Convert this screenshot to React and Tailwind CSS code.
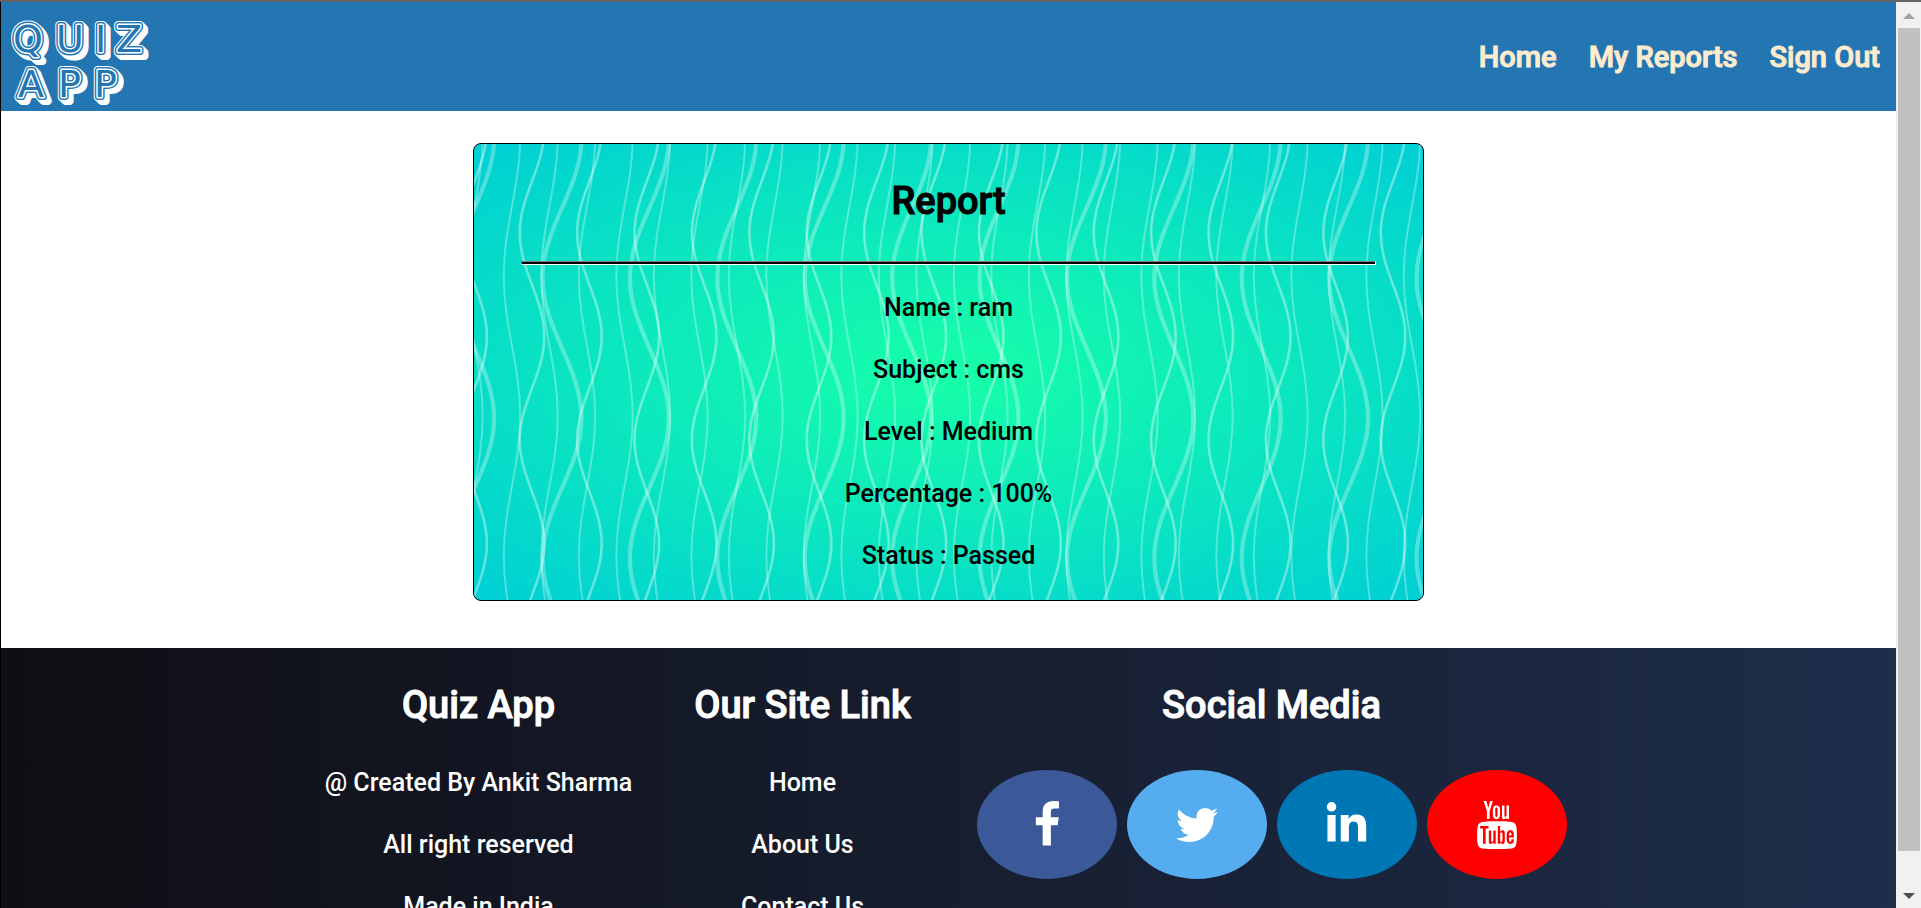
import React from "react";
import { FaTwitter, FaLinkedinIn } from "react-icons/fa";
import { TfiYoutube } from "react-icons/tfi";

function sine(cx, amp, minY, half) {
  const k = half * 0.3642;
  let y = minY - 4 * half;
  let x = cx - amp;
  let d = `M${x} ${y}`;
  for (let i = 0; i < 10; i++) {
    const nx = i % 2 === 0 ? cx + amp : cx - amp;
    d += `C${x} ${y + k} ${nx} ${y + half - k} ${nx} ${y + half}`;
    x = nx;
    y += half;
  }
  return d;
}

const waves = [
  { start: 88, step: 87.4, width: 4.2, amp: 19.5, minY: 134, half: 140, opacity: 0.3 },
  { start: 58, step: 57.4, width: 2.6, amp: 12.3, minY: 89, half: 103.5, opacity: 0.38 },
  { start: 38, step: 37.5, width: 2, amp: 8.2, minY: 132, half: 140, opacity: 0.3 },
];

function WaveBackdrop() {
  return (
    <svg aria-hidden="true" className="absolute inset-0 -z-10 h-full w-full" fill="none" stroke="#fff">
      {waves.map((w) => (
        <g key={w.step} strokeWidth={w.width} strokeOpacity={w.opacity}>
          {Array.from({ length: 32 }, (_, i) => (
            <path key={i} d={sine(w.start + (i - 1) * w.step, w.amp, w.minY, w.half)} />
          ))}
        </g>
      ))}
    </svg>
  );
}

function Logo() {
  const depth = [4, 3, 2, 1];
  return (
    <svg width="150" height="96" viewBox="0 0 150 96" role="img" aria-label="Quiz App" className="block">
      <defs>
        <g id="logo-letters" fontFamily="DejaVu Sans" fontWeight="400" fontSize="38" strokeLinejoin="round">
          <text x="12 55 94 115" y="43">QUIZ</text>
          <text x="17 57 93" y="88">APP</text>
        </g>
      </defs>
      {depth.map((n) => (
        <use key={n} href="#logo-letters" x={n} y={n} fill="#fff" stroke="#fff" strokeWidth="8" />
      ))}
      <use href="#logo-letters" fill="#fff" stroke="#fff" strokeWidth="8" />
      <use href="#logo-letters" fill="#2476b3" stroke="#2476b3" strokeWidth="6" />
      <use href="#logo-letters" fill="#2476b3" stroke="#fff" strokeWidth="3" />
      <use href="#logo-letters" fill="#2476b3" />
    </svg>
  );
}

function FacebookIcon() {
  return (
    <svg viewBox="0 0 1792 1792" className="size-12" fill="currentColor" aria-hidden="true">
      <path d="M1343 12v264h-157q-86 0-116 36t-30 108v189h293l-39 296h-254v759h-306v-759h-255v-296h255v-218q0-186 104-288.500t277-102.500q147 0 228 12z" />
    </svg>
  );
}

const report = ["Name : ram", "Subject : cms", "Level : Medium", "Percentage : 100%", "Status : Passed"];
const socials = [
  { name: "Facebook", color: "bg-[#3b5998]", icon: <FacebookIcon /> },
  { name: "Twitter", color: "bg-[#55acee]", icon: <FaTwitter size={42} /> },
  { name: "LinkedIn", color: "bg-[#0077b5]", icon: <FaLinkedinIn size={45} /> },
  { name: "YouTube", color: "bg-[#ff0000]", icon: <TfiYoutube size={48} /> },
];

const heading = "mt-[35px] text-[38px] leading-[44px] whitespace-nowrap [-webkit-text-stroke:1px]";

export default function App() {
  return (
    <div className="flex h-screen overflow-hidden border-t-2 border-[#646464] font-['Roboto',sans-serif] font-medium">
      <div className="min-w-0 flex-1 overflow-hidden border-l border-black bg-white">
        <header className="flex h-[109px] items-center justify-between bg-[#2476b3] pr-4">
          <a href="#home"><Logo /></a>
          <nav className="flex gap-8 text-[29px] leading-[36px] text-[#ffebcd] [-webkit-text-stroke:1px]">
            <a href="#home">Home</a>
            <a href="#reports">My Reports</a>
            <a href="#signout">Sign Out</a>
          </nav>
        </header>

        <main className="px-4 pt-8 pb-[47px]">
          <section className="relative isolate mx-auto w-[951px] max-w-full overflow-hidden rounded-lg border border-black bg-[radial-gradient(ellipse_farthest-corner,#17ffa8_0%,#00cfd5_100%)] px-[47px] pb-[29px] text-center text-black">
            <WaveBackdrop />
            <h1 className="pt-[35px] text-[38px] leading-[44px] [-webkit-text-stroke:1px]">Report</h1>
            <hr className="mt-[38px] h-1 border border-t-[#808080] border-r-white border-b-white border-l-[#808080] bg-black" />
            <div className="mt-7 flex flex-col gap-8 text-[25px] leading-[30px]">
              {report.map((line) => <p key={line}>{line}</p>)}
            </div>
          </section>
        </main>

        <footer className="flex h-[400px] justify-center bg-[linear-gradient(to_right,#0f0e14,#1e2d4a)] pr-[69px] text-center text-[25px] leading-[30px] text-white">
          <section className="flex w-[434px] flex-col items-center gap-8">
            <h2 className={`${heading} mb-[9px]`}>Quiz App</h2>
            <p>@ Created By Ankit Sharma</p>
            <p>All right reserved</p>
            <p>Made in India</p>
          </section>
          <section className="flex w-[214px] flex-col items-center gap-8">
            <h2 className={`${heading} mb-[9px]`}>Our Site Link</h2>
            <a href="#home">Home</a>
            <a href="#about">About Us</a>
            <a href="#contact">Contact Us</a>
          </section>
          <section className="ml-[67px]">
            <h2 className={heading}>Social Media</h2>
            <div className="mt-[43px] flex gap-[10px]">
              {socials.map((s) => (
                <a key={s.name} href={`#${s.name}`} aria-label={s.name} className={`flex h-[109px] w-[140px] items-center justify-center rounded-[50%] ${s.color}`}>
                  {s.icon}
                </a>
              ))}
            </div>
          </section>
        </footer>
      </div>

      <div aria-hidden="true" className="flex w-[25px] flex-col items-center bg-[#f1f1f1]">
        <svg width="25" height="26" viewBox="0 0 25 26"><path d="M7 17l6-6 6 6z" fill="#a3a3a3" /></svg>
        <div className="h-[823px] w-[22px] bg-[#c1c1c1]" />
        <svg width="25" height="26" viewBox="0 0 25 26" className="mt-auto"><path d="M7 11l6 6 6-6z" fill="#505050" /></svg>
      </div>
    </div>
  );
}
